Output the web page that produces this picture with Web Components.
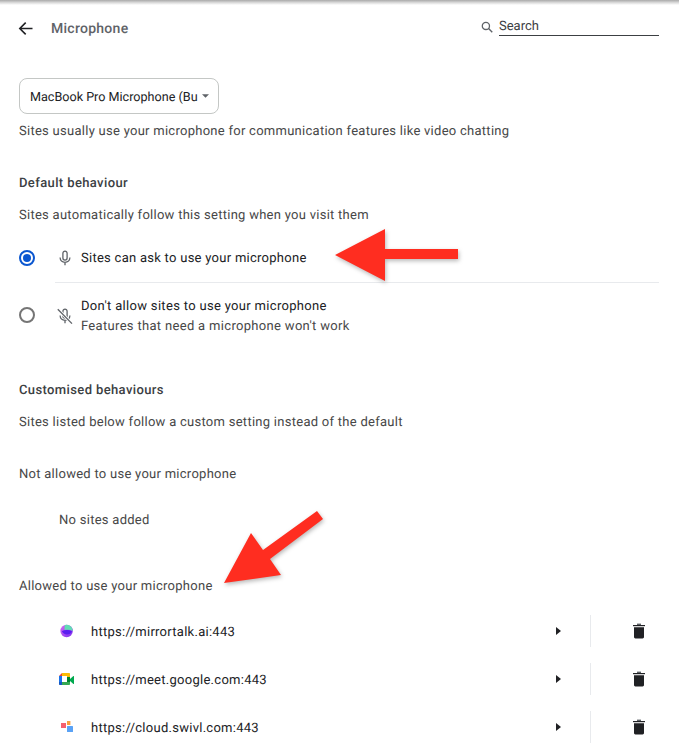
<!DOCTYPE html>
<html lang="en">
<head>
<meta charset="UTF-8">
<title>Microphone settings</title>
<style>
  html, body { margin: 0; padding: 0; background: #fff; height: 750px; overflow: hidden; }
  body { font-family: Roboto, "Liberation Sans", sans-serif; font-size: 13px; color: #202124; text-rendering: geometricPrecision; letter-spacing: .27px; }
</style>
</head>
<body>
<settings-page>
  <subpage-header slot="header">Microphone</subpage-header>
  <device-select>MacBook Pro Microphone (Bu</device-select>
  <text-line h="32" muted>Sites usually use your microphone for communication features like video chatting</text-line>
  <text-line h="32" mt="20" strong>Default behaviour</text-line>
  <text-line h="32" muted>Sites automatically follow this setting when you visit them</text-line>
  <radio-row checked h="48" mt="4" icon="mic">Sites can ask to use your microphone</radio-row>
  <radio-row divided h="66" icon="mic-off">Don't allow sites to use your microphone<span slot="sub">Features that need a microphone won't work</span></radio-row>
  <text-line h="32" mt="25" strong>Customised behaviours</text-line>
  <text-line h="32" muted>Sites listed below follow a custom setting instead of the default</text-line>
  <text-line h="32" mt="20" muted>Not allowed to use your microphone</text-line>
  <text-line h="32" mt="14" indent="40" muted>No sites added</text-line>
  <text-line h="32" mt="34" muted>Allowed to use your microphone</text-line>
  <site-row mt="6" icon="mirror">https://mirrortalk.ai:443</site-row>
  <site-row icon="meet">https://meet.google.com:443</site-row>
  <site-row icon="swivl">https://cloud.swivl.com:443</site-row>
  <red-arrows slot="over"></red-arrows>
</settings-page>

<script>
  class SettingsPage extends HTMLElement {
    constructor() {
      super();
      this.attachShadow({ mode: "open" }).innerHTML = `
        <style>
          :host { display: block; position: relative; width: 679px; height: 750px; overflow: hidden; background: #fff; }
          .top { height: 5px; background: linear-gradient(#a9a9a9, #d8d8d8 50%, #fff); }
          .body { display: flex; flex-direction: column; padding: 0 20px 0 19px; }
        </style>
        <div class="top"></div>
        <slot name="header"></slot>
        <div class="body"><slot></slot></div>
        <slot name="over"></slot>
      `;
    }
  }

  class SubpageHeader extends HTMLElement {
    constructor() {
      super();
      this.attachShadow({ mode: "open" }).innerHTML = `
        <style>
          :host { display: flex; align-items: center; height: 46px; padding: 0 20px 0 18px; }
          svg { display: block; flex: none; }
          .back { width: 15px; height: 15px; margin-right: 18px; }
          .title { flex: 1; font-size: 14px; color: #5f6368; font-weight: 500; padding-top: 2px; }
          .search { display: flex; align-items: center; width: 178px; margin-top: -5px; }
          .search svg { width: 12px; height: 12px; margin-right: 6px; margin-top: 2px; }
          .input { flex: 1; height: 18px; line-height: 19px; font-size: 13px; letter-spacing: 0; color: #3c4043; border-bottom: 1px solid #3c4043; margin-top: 1px; }
        </style>
        <svg class="back" viewBox="0 0 15 15"><path d="M14.5 7.5H2M7.7 1.6 1.8 7.5l5.9 5.9" fill="none" stroke="#202124" stroke-width="1.6"/></svg>
        <div class="title"><slot></slot></div>
        <div class="search">
          <svg viewBox="0 0 13 13"><circle cx="5.3" cy="5.3" r="3.9" fill="none" stroke="#5f6368" stroke-width="1.4"/><path d="M8.2 8.2 12.2 12.2" stroke="#5f6368" stroke-width="1.5"/></svg>
          <div class="input">Search</div>
        </div>
      `;
    }
  }

  class DeviceSelect extends HTMLElement {
    constructor() {
      super();
      this.attachShadow({ mode: "open" }).innerHTML = `
        <style>
          :host { display: flex; align-items: center; box-sizing: border-box; width: 200px; height: 36px; margin-top: 27px; padding-left: 10px; border: 1px solid #c4c7c5; border-radius: 8px; color: #202124; font-size: 12.6px; letter-spacing: 0; }
          .label { white-space: nowrap; padding-top: 2px; }
          svg { width: 7px; height: 4px; margin-left: 4px; margin-top: -1px; }
        </style>
        <span class="label"><slot></slot></span>
        <svg viewBox="0 0 8 4"><path d="M0 0h8L4 4z" fill="#5f6368"/></svg>
      `;
    }
  }

  class TextLine extends HTMLElement {
    constructor() {
      super();
      const h = this.getAttribute("h") || 32;
      const mt = this.getAttribute("mt") || 0;
      const indent = this.getAttribute("indent") || 0;
      this.attachShadow({ mode: "open" }).innerHTML = `
        <style>
          :host { display: flex; align-items: center; box-sizing: border-box; height: ${h}px; margin-top: ${mt}px; padding-left: ${indent}px; padding-top: 2px; color: #202124; }
          :host([muted]) { color: #474747; }
          :host([strong]) { font-weight: 500; color: #3c4043; letter-spacing: .38px; }
        </style>
        <slot></slot>
      `;
    }
  }

  const MIC = `<path d="M8 1.2a2.1 2.1 0 0 0-2.1 2.1v4.7a2.1 2.1 0 0 0 4.2 0V3.3A2.1 2.1 0 0 0 8 1.2z" fill="none" stroke="#5f6368" stroke-width="1.3"/><path d="M3.1 7.6c0 2.8 2.2 4.7 4.9 4.7s4.9-1.9 4.9-4.7M8 12v3.2" fill="none" stroke="#5f6368" stroke-width="1.3"/>`;

  const ROW_ICONS = {
    "mic": MIC,
    "mic-off": MIC + `<path d="M2 2.2 14.2 15" stroke="#fff" stroke-width="3"/><path d="M.8 1.2 15 15.6" stroke="#5f6368" stroke-width="1.3"/>`
  };

  class RadioRow extends HTMLElement {
    constructor() {
      super();
      const h = this.getAttribute("h") || 48;
      const mt = this.getAttribute("mt") || 0;
      const icon = ROW_ICONS[this.getAttribute("icon")] || "";
      this.attachShadow({ mode: "open" }).innerHTML = `
        <style>
          :host { display: flex; align-items: center; height: ${h}px; margin-top: ${mt}px; }
          :host([divided]) { letter-spacing: .32px; }
          .radio { flex: none; box-sizing: border-box; width: 16px; height: 16px; border: 2px solid #757575; border-radius: 50%; position: relative; }
          :host([checked]) .radio { border-color: #0b57d0; }
          :host([checked]) .radio::after { content: ""; position: absolute; inset: 2px; border-radius: 50%; background: #0b57d0; }
          .rest { flex: 1; align-self: stretch; display: flex; align-items: center; margin-left: 20px; }
          :host([divided]) .rest { border-top: 1px solid #e8eaed; }
          svg { flex: none; width: 16px; height: 16px; margin-right: 8px; margin-left: 2px; }
          .text { line-height: 20px; color: #202124; padding-top: 2px; }
          ::slotted([slot="sub"]) { display: block; color: #474747; }
        </style>
        <span class="radio"></span>
        <div class="rest">
          <svg viewBox="0 0 16 16">${icon}</svg>
          <div class="text"><slot></slot><slot name="sub"></slot></div>
        </div>
      `;
    }
  }

  const SITE_ICONS = {
    mirror: `<defs><linearGradient id="g" x1="0" y1="0" x2="1" y2="1"><stop offset="0" stop-color="#d86cf0"/><stop offset="1" stop-color="#7a2cf0"/></linearGradient></defs>
      <circle cx="7.6" cy="8" r="6.2" fill="url(#g)"/>
      <path d="M6 2a6.2 6.2 0 0 1 7.8 6C11 6.6 8.4 6.4 5.6 7 5.4 5.2 5.5 3.4 6 2z" fill="#62dcb4"/>
      <path d="M2.8 8.2C6 6.6 10 6.8 13 8.6 12 10.8 9.4 11.8 7.2 11.4 5 11 3.6 9.8 2.8 8.2z" fill="#5a1ef0"/>`,
    meet: `<path d="M3 2h7c.6 0 1 .4 1 1v3H8V5H3z" fill="#fbbc04"/><path d="M3 2v3H0z" fill="#ea4335"/>
      <path d="M0 5h3v6H0z" fill="#1a73e8"/><path d="M0 11h3v3H1c-.6 0-1-.4-1-1z" fill="#1557c0"/>
      <path d="M3 11h5v-1l3-1v4c0 .6-.4 1-1 1H3z" fill="#34a853"/><path d="M8 6h3v5H8z" fill="#00832d"/>
      <path d="M11 8 14.4 5c.3-.2.6 0 .6.3v7.4c0 .3-.3.5-.6.3L11 10z" fill="#00a94f"/>`,
    swivl: `<rect x="2" y="4" width="5" height="5" fill="#f5606e"/><rect x="8" y="2" width="3.4" height="4" fill="#f9a03f"/><rect x="8" y="7" width="6" height="6" rx=".5" fill="#5aa2f5"/>`
  };

  class SiteRow extends HTMLElement {
    constructor() {
      super();
      const mt = this.getAttribute("mt") || 0;
      const icon = SITE_ICONS[this.getAttribute("icon")] || "";
      this.attachShadow({ mode: "open" }).innerHTML = `
        <style>
          :host { display: flex; align-items: center; height: 48px; flex: none; margin-top: ${mt}px; }
          .fav { flex: none; width: 16px; height: 16px; margin-left: 40px; margin-right: 16px; }
          .url { flex: 1; color: #202124; padding-top: 2px; }
          .more { flex: none; width: 5px; height: 8px; margin-right: 29px; }
          .sep { flex: none; width: 1px; height: 32px; background: #e8eaed; }
          .del { flex: none; width: 12px; height: 16px; margin-left: 42px; margin-right: 14px; }
        </style>
        <svg class="fav" viewBox="0 0 16 16">${icon}</svg>
        <div class="url"><slot></slot></div>
        <svg class="more" viewBox="0 0 5 8"><path d="M0 0l5 4-5 4z" fill="#202124"/></svg>
        <div class="sep"></div>
        <svg class="del" viewBox="0 0 12 16"><path d="M0 2h12v1.2H0z" fill="#202124"/><path d="M4 .6h4V2H4z" fill="#5f6368"/><path d="M1 4.2h10V14c0 .8-.6 1.4-1.4 1.4H2.4C1.6 15.4 1 14.8 1 14z" fill="#202124"/></svg>
      `;
    }
  }

  class RedArrows extends HTMLElement {
    constructor() {
      super();
      this.attachShadow({ mode: "open" }).innerHTML = `
        <style>
          :host { position: absolute; inset: 0; pointer-events: none; }
          svg { display: block; width: 679px; height: 750px; filter: drop-shadow(1px 2px 2px rgba(0,0,0,.28)); }
        </style>
        <svg viewBox="0 0 679 750">
          <path d="M335 255 385 229 385 249 458 249 458 259 385 259 385 281z" fill="#ff2d20"/>
          <path d="M224 583 251 533 263 550 317 511 323 519 270 559 281 575z" fill="#ff2d20"/>
        </svg>
      `;
    }
  }

  customElements.define("settings-page", SettingsPage);
  customElements.define("subpage-header", SubpageHeader);
  customElements.define("device-select", DeviceSelect);
  customElements.define("text-line", TextLine);
  customElements.define("radio-row", RadioRow);
  customElements.define("site-row", SiteRow);
  customElements.define("red-arrows", RedArrows);
</script>
</body>
</html>
